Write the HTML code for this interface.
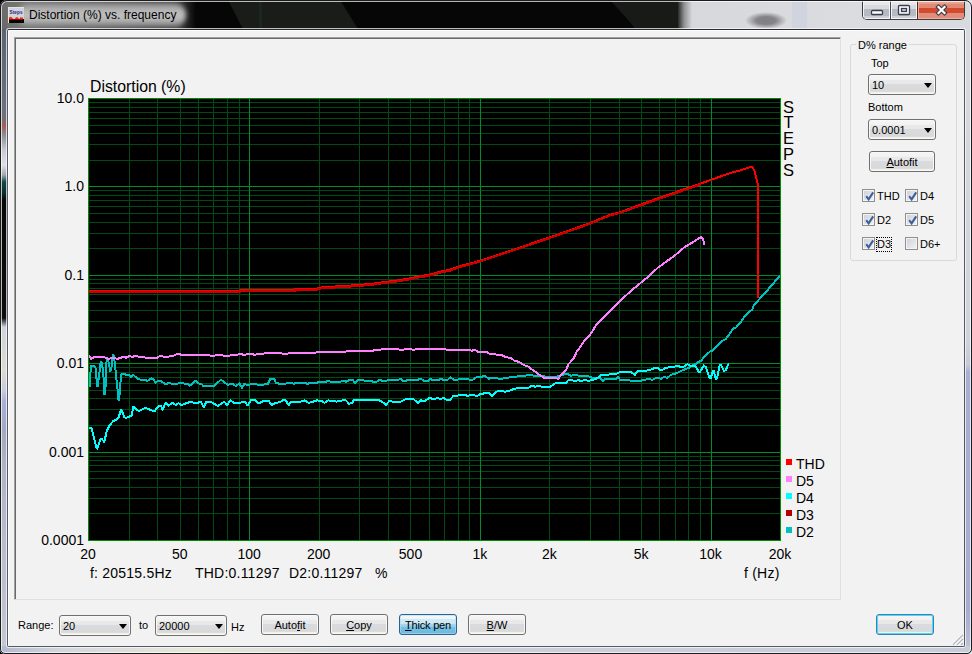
<!DOCTYPE html>
<html><head><meta charset="utf-8">
<style>
*{margin:0;padding:0;box-sizing:border-box}
html,body{width:972px;height:654px;overflow:hidden;background:linear-gradient(to right,#000 0,#000 486px,#e8e8ec 486px);font-family:"Liberation Sans",sans-serif}
.abs{position:absolute}
#frame{position:absolute;left:0;top:0;width:972px;height:654px;border-radius:7px 7px 5px 5px;overflow:hidden;background:#cdd0d8}
#fborder{position:absolute;left:0;top:0;width:972px;height:654px;border:1px solid #1c1c1c;border-radius:7px 7px 5px 5px;box-shadow:inset 0 0 0 1px rgba(255,255,255,.7)}
#lb{position:absolute;left:0;top:0;width:7px;height:654px;background:linear-gradient(to bottom,#6e6e6e 0,#6a6a6c 27px,#5c6470 30px,#687080 100px,#707078 118px,#a06058 126px,#909098 136px,#c8c8d0 150px,#e0e0e8 165px,#a0a8a8 175px,#104848 182px,#0c3030 192px,#080808 200px,#0c0c0c 318px,#d0d4dc 327px,#dcdcd0 370px,#c8cce0 390px,#a8b0d8 402px,#a4a8c0 430px,#b0b4c8 470px,#c4c8d2 654px)}
#title{position:absolute;left:0;top:0;width:972px;height:29px;
 background:linear-gradient(to right,#6e6e6e 0,#747474 20px,#3a3a3a 180px,#060606 196px,#060606 676px,#909092 684px,#d6d8dc 692px,#dadce0 860px,#d8dadf 972px)}
#tglow{position:absolute;left:18px;top:3px;width:168px;height:24px;border-radius:12px;background:linear-gradient(to bottom,#8c8c8c 0,#b0b0b0 25%,#c2c2c2 50%,#b0b0b0 75%,#7a7a7a 100%);filter:blur(2.5px)}
#ttext{position:absolute;left:29px;top:8px;font-size:12px;color:#000;white-space:nowrap}
#client{position:absolute;left:7px;top:29px;width:958px;height:618px;border:1px solid #555964;border-top-color:#2a2a2e;border-radius:2px;background:#f2f2f2;box-shadow:0 0 0 1px rgba(248,250,255,.75),inset 1px 1px 0 #fff}
#panel{position:absolute;left:14px;top:37px;width:827px;height:563px;border-top:1px solid #a0a0a0;border-left:1px solid #a0a0a0;border-right:1px solid #e6dce6;border-bottom:1px solid #e6dce6;box-shadow:inset 1px 1px 0 #696969}
.yl{position:absolute;left:0;width:84px;text-align:right;font-size:14px;line-height:18px;color:#000}
.xl{position:absolute;top:545px;width:60px;text-align:center;font-size:14px;line-height:18px;color:#000}
.lsq{position:absolute;left:786px;width:6px;height:6px}
.lt{position:absolute;left:796px;font-size:14px;line-height:18px;color:#000}
.t14{position:absolute;font-size:14px;line-height:18px;color:#000;white-space:nowrap}
.ui{position:absolute;font-size:11px;line-height:13px;color:#000;white-space:nowrap}
.btn{position:absolute;border:1px solid #707070;border-radius:3px;background:linear-gradient(to bottom,#f6f6f6 0,#f1f1f1 5px,#e9e9ea 5px,#e8e8e9 9px,#dadbdf 9px,#d8d9dd 16px,#dcdac6 16px,#e2e0d0 17px,#f0f0f0 17px);box-shadow:inset 0 0 0 1px #f8f8f8;text-align:center;font-size:11px;color:#000}
.btn span{position:absolute;left:0;right:0;top:3.8px;line-height:13px}
.btnp{position:absolute;border:1px solid #2c628b;border-radius:3px;background:linear-gradient(to bottom,#f4f8fa 0,#eef5f9 4px,#d2ebf5 4px,#cbe7f3 9px,#a8d7ee 9px,#90cdea 12px,#78c0e4 12px,#6cb8e0 19px);box-shadow:inset 0 0 0 1px rgba(180,220,240,.6);text-align:center;font-size:11px;color:#000}
.btnp span{position:absolute;left:0;right:0;top:3.8px;line-height:13px}
.btnd{position:absolute;border:1px solid #3c7fb1;border-radius:3px;background:linear-gradient(to bottom,#f6f6f6 0,#f1f1f1 5px,#e9e9ea 5px,#e8e8e9 9px,#dadbdf 9px,#d8d9dd 16px,#dcdac6 16px,#e2e0d0 17px,#f0f0f0 17px);box-shadow:inset 0 0 0 1px #48dbfb;text-align:center;font-size:11px;color:#000}
.btnd span{position:absolute;left:0;right:0;top:3.8px;line-height:13px}
.combo{position:absolute;border:1px solid #707070;border-radius:3px;background:linear-gradient(to bottom,#f6f6f6 0,#f1f1f1 5px,#e9e9ea 5px,#e8e8e9 9px,#dadbdf 9px,#d8d9dd 16px,#dcdac6 16px,#e2e0d0 17px,#f0f0f0 17px);box-shadow:inset 0 0 0 1px #f8f8f8;font-size:11px;color:#000}
.combo span{position:absolute;left:3px;top:4.3px;line-height:13px}
.arr{position:absolute;right:3.5px;top:8px;width:0;height:0;border-left:4.5px solid transparent;border-right:4.5px solid transparent;border-top:5px solid #000}
.cb{position:absolute;height:13px}
.box{position:absolute;left:0;top:0;width:13px;height:13px;border:1px solid #8e8f8f;background:linear-gradient(135deg,#cbcfd5,#f4f4f6);box-shadow:inset 0 0 0 1px #f4f4f4}
.cbl{position:absolute;left:15px;top:1px;font-size:11px;line-height:13px;white-space:nowrap}
.focus{outline:1px dotted #000}
#grp{position:absolute;left:850px;top:44px;width:107px;height:217px;border:1px solid #d6dadd;border-radius:3px}
</style></head><body>
<div id="frame">
<div id="title"></div>
<div class="abs" style="left:228px;top:0;width:130px;height:29px;background:#1a1c1a;clip-path:polygon(0 0,112px 0,130px 29px,15px 29px)"></div>
<div class="abs" style="left:259px;top:2px;width:3px;height:27px;background:#18281f"></div>
<div class="abs" style="left:610px;top:0;width:68px;height:29px;background:#181a18;clip-path:polygon(0 0,68px 0,68px 29px,25px 29px,20px 22px)"></div>
<div class="abs" style="left:745px;top:12px;width:42px;height:17px;background:radial-gradient(closest-side,rgba(128,128,128,1) 0%,rgba(132,132,134,1) 45%,rgba(170,170,174,.8) 75%,rgba(216,216,220,0) 100%)"></div>
<div class="abs" style="left:792px;top:1px;width:15px;height:28px;background:#d0d4de"></div>
<div id="lb"></div>
<div class="abs" style="left:965px;top:20px;width:7px;height:634px;background:linear-gradient(to bottom,#d8dadf 0,#d0d3da 320px,#c6c9d6 345px,#aaaed2 352px,#a8acd0 590px,#b4b8d4 615px,#c4c8d4 634px)"></div>
<div class="abs" style="left:0;top:646px;width:972px;height:8px;background:linear-gradient(to right,#b4b8cc 0,#c8ccd8 40px,#d4d6dc 60px,#e8e8d8 200px,#cdd0d8 400px,#c8ccd8 972px)"></div>
</div>
<div id="tglow"></div>
<div class="abs" style="left:862px;top:0;width:103px;height:20px;border:1px solid #3c3c3c;border-top:none;border-radius:0 0 5px 5px;overflow:hidden">
 <div class="abs" style="left:0;top:0;width:27px;height:19px;border:1px solid #f4f4f6;border-top:none;background:linear-gradient(to bottom,#ececef 0,#e6e6ea 5px,#d8dadf 5px,#d8dadf 9px,#b6bac3 9px,#b6bac3 16px,#cdd0d8 16px)"></div>
 <div class="abs" style="left:27px;top:0;width:1px;height:19px;background:#4a4a4a"></div>
 <div class="abs" style="left:28px;top:0;width:26px;height:19px;border:1px solid #f4f4f6;border-top:none;background:linear-gradient(to bottom,#ececef 0,#e6e6ea 5px,#d8dadf 5px,#d8dadf 9px,#b6bac3 9px,#b6bac3 16px,#cdd0d8 16px)"></div>
 <div class="abs" style="left:54px;top:0;width:1px;height:19px;background:#4a2a20"></div>
 <div class="abs" style="left:55px;top:0;width:47px;height:19px;border:1px solid #f0b0a0;border-top:none;background:linear-gradient(to bottom,#eaa898 0,#e8a090 4px,#e08a74 4px,#e08a74 8px,#d2492e 8px,#d24a30 13px,#e28c7a 13px)"></div>
</div>
<svg class="abs" style="left:862px;top:0" width="110" height="20">
 <rect x="9.5" y="10.5" width="11" height="4" rx="1" fill="#fff" stroke="#3a3e4c" stroke-width="1.3"/>
 <rect x="36.5" y="5.5" width="11" height="9" rx="1" fill="#fff" stroke="#3a3e4c" stroke-width="1.3"/>
 <rect x="39.5" y="8.5" width="5" height="3" fill="#d0d2d8" stroke="#3a3e4c" stroke-width="1.3"/>
 <path d="M76.5 7 L82.5 13 M82.5 7 L76.5 13" stroke="#3a3e4c" stroke-width="4.4" stroke-linecap="square"/>
 <path d="M76.5 7 L82.5 13 M82.5 7 L76.5 13" stroke="#fff" stroke-width="2.2" stroke-linecap="square"/>
</svg>
<svg class="abs" style="left:8px;top:7px" width="16" height="16">
<rect x="0" y="0" width="16" height="16" fill="#d2d2e0"/>
<rect x="0" y="0" width="16" height="1" fill="#e6e6d6"/>
<rect x="0" y="0" width="1" height="16" fill="#e6e6d6"/>
<rect x="1" y="12" width="15" height="4" fill="#060404"/>
<path d="M1 10.5 Q2.5 9 4 10.5 Q5.5 13 7 11.5 Q8.5 9 10 10.5 Q11 13 12 11 Q13 9 14 11 L15 10 L15 12.5 L1 12.5 Z" fill="#ff2a0a"/>
<text x="1.5" y="6.5" font-size="4.6" font-family="Liberation Sans" fill="#1e2a6e" font-weight="bold" textLength="13">Steps</text>
</svg>
<div id="ttext">Distortion (%) vs. frequency</div>
<div id="client"></div>
<div id="panel"></div>
<svg class="abs" style="left:0;top:0" width="972" height="654" shape-rendering="crispEdges">
<rect x="88" y="98" width="693" height="443" fill="#000"/>
<rect x="88" y="513" width="693" height="1" fill="#004a16"/>
<rect x="88" y="498" width="693" height="1" fill="#004a16"/>
<rect x="88" y="487" width="693" height="1" fill="#004a16"/>
<rect x="88" y="478" width="693" height="1" fill="#004a16"/>
<rect x="88" y="471" width="693" height="1" fill="#004a16"/>
<rect x="88" y="465" width="693" height="1" fill="#004a16"/>
<rect x="88" y="460" width="693" height="1" fill="#004a16"/>
<rect x="88" y="456" width="693" height="1" fill="#004a16"/>
<rect x="88" y="425" width="693" height="1" fill="#004a16"/>
<rect x="88" y="409" width="693" height="1" fill="#004a16"/>
<rect x="88" y="398" width="693" height="1" fill="#004a16"/>
<rect x="88" y="390" width="693" height="1" fill="#004a16"/>
<rect x="88" y="383" width="693" height="1" fill="#004a16"/>
<rect x="88" y="377" width="693" height="1" fill="#004a16"/>
<rect x="88" y="372" width="693" height="1" fill="#004a16"/>
<rect x="88" y="367" width="693" height="1" fill="#004a16"/>
<rect x="88" y="337" width="693" height="1" fill="#004a16"/>
<rect x="88" y="321" width="693" height="1" fill="#004a16"/>
<rect x="88" y="310" width="693" height="1" fill="#004a16"/>
<rect x="88" y="301" width="693" height="1" fill="#004a16"/>
<rect x="88" y="294" width="693" height="1" fill="#004a16"/>
<rect x="88" y="288" width="693" height="1" fill="#004a16"/>
<rect x="88" y="283" width="693" height="1" fill="#004a16"/>
<rect x="88" y="279" width="693" height="1" fill="#004a16"/>
<rect x="88" y="248" width="693" height="1" fill="#004a16"/>
<rect x="88" y="233" width="693" height="1" fill="#004a16"/>
<rect x="88" y="222" width="693" height="1" fill="#004a16"/>
<rect x="88" y="213" width="693" height="1" fill="#004a16"/>
<rect x="88" y="206" width="693" height="1" fill="#004a16"/>
<rect x="88" y="200" width="693" height="1" fill="#004a16"/>
<rect x="88" y="195" width="693" height="1" fill="#004a16"/>
<rect x="88" y="190" width="693" height="1" fill="#004a16"/>
<rect x="88" y="160" width="693" height="1" fill="#004a16"/>
<rect x="88" y="144" width="693" height="1" fill="#004a16"/>
<rect x="88" y="133" width="693" height="1" fill="#004a16"/>
<rect x="88" y="125" width="693" height="1" fill="#004a16"/>
<rect x="88" y="118" width="693" height="1" fill="#004a16"/>
<rect x="88" y="112" width="693" height="1" fill="#004a16"/>
<rect x="88" y="107" width="693" height="1" fill="#004a16"/>
<rect x="88" y="102" width="693" height="1" fill="#004a16"/>
<rect x="129" y="98" width="1" height="443" fill="#004a16"/>
<rect x="157" y="98" width="1" height="443" fill="#004a16"/>
<rect x="180" y="98" width="1" height="443" fill="#004a16"/>
<rect x="198" y="98" width="1" height="443" fill="#004a16"/>
<rect x="213" y="98" width="1" height="443" fill="#004a16"/>
<rect x="227" y="98" width="1" height="443" fill="#004a16"/>
<rect x="239" y="98" width="1" height="443" fill="#004a16"/>
<rect x="319" y="98" width="1" height="443" fill="#004a16"/>
<rect x="359" y="98" width="1" height="443" fill="#004a16"/>
<rect x="388" y="98" width="1" height="443" fill="#004a16"/>
<rect x="410" y="98" width="1" height="443" fill="#004a16"/>
<rect x="429" y="98" width="1" height="443" fill="#004a16"/>
<rect x="444" y="98" width="1" height="443" fill="#004a16"/>
<rect x="458" y="98" width="1" height="443" fill="#004a16"/>
<rect x="469" y="98" width="1" height="443" fill="#004a16"/>
<rect x="549" y="98" width="1" height="443" fill="#004a16"/>
<rect x="590" y="98" width="1" height="443" fill="#004a16"/>
<rect x="619" y="98" width="1" height="443" fill="#004a16"/>
<rect x="641" y="98" width="1" height="443" fill="#004a16"/>
<rect x="659" y="98" width="1" height="443" fill="#004a16"/>
<rect x="675" y="98" width="1" height="443" fill="#004a16"/>
<rect x="688" y="98" width="1" height="443" fill="#004a16"/>
<rect x="700" y="98" width="1" height="443" fill="#004a16"/>
<rect x="88" y="186" width="693" height="1" fill="#008c28"/>
<rect x="88" y="275" width="693" height="1" fill="#008c28"/>
<rect x="88" y="363" width="693" height="1" fill="#008c28"/>
<rect x="88" y="452" width="693" height="1" fill="#008c28"/>
<rect x="249" y="98" width="1" height="443" fill="#008c28"/>
<rect x="480" y="98" width="1" height="443" fill="#008c28"/>
<rect x="711" y="98" width="1" height="443" fill="#008c28"/>
<rect x="88.5" y="98.5" width="692" height="442" fill="none" stroke="#008c00" stroke-width="1"/>
</svg>
<svg class="abs" style="left:0;top:0" width="972" height="654">
<clipPath id="cp"><rect x="89" y="99" width="691" height="441"/></clipPath>
<g clip-path="url(#cp)">
<polyline points="89.7,385.8 90.1,376.6 91.0,366.0 94.3,366.0 95.6,368.3 96.6,379.4 97.0,385.8 98.0,385.8 98.8,377.5 100.7,361.9 102.0,362.4 103.9,381.2 104.3,394.0 105.3,394.0 105.7,381.2 106.6,360.0 108.0,359.6 110.3,371.1 111.7,366.5 113.0,355.0 114.0,355.5 115.0,365.6 116.3,377.5 117.7,390.4 118.6,400.5 120.0,391.3 120.9,374.8 122.2,373.7 124.5,374.3 129.1,375.2 131.0,377.5 133.2,374.8 138.3,379.4 145.6,380.0 147.4,381.0 151.7,378.3 153.6,379.2 155.4,382.9 157.9,380.8 161.0,381.0 165.3,384.1 169.6,382.9 172.1,384.1 177.0,384.1 179.5,382.9 188.1,384.1 189.4,386.0 195.6,380.8 199.3,383.8 201.7,384.1 203.0,385.7 214.0,385.7 220.9,379.8 227.7,384.8 232.6,383.8 235.7,386.0 239.4,383.5 241.9,387.8 244.3,384.1 247.4,384.8 253.6,384.1 259.3,384.8 263.6,384.8 264.9,383.8 268.0,383.8 270.4,378.6 274.1,378.6 276.0,382.9 279.7,383.8 285.2,383.8 287.1,382.9 292.0,382.9 293.9,384.1 295.7,382.9 305.6,382.9 307.5,384.1 309.3,382.9 316.7,382.9 318.6,381.7 326.0,381.7 327.8,380.8 331.5,382.0 340.2,382.0 342.0,380.8 346.4,381.7 350.0,379.6 352.5,379.8 355.0,382.9 358.7,379.8 362.4,379.8 364.3,380.8 371.0,380.8 373.5,382.0 376.2,382.0 379.9,379.8 382.3,380.8 386.7,380.8 388.5,379.8 398.4,379.8 400.2,378.6 402.7,380.8 405.8,380.8 407.7,379.8 418.1,379.8 420.0,378.6 424.3,380.8 428.0,380.8 430.5,378.6 431.7,379.8 439.1,379.8 441.0,378.6 442.8,379.8 447.8,379.8 450.2,377.3 454.0,379.8 457.7,379.8 458.9,378.6 467.5,378.6 469.4,379.8 472.5,379.8 476.2,377.3 478.0,376.7 482.3,376.7 484.2,375.5 488.5,378.6 494.6,378.0 500.7,378.9 511.9,377.0 524.2,375.8 530.4,374.6 534.0,376.0 556.3,377.0 558.8,375.8 567.4,373.6 571.0,376.0 574.2,374.8 580.0,376.0 587.3,376.0 592.3,377.8 599.7,377.8 602.8,380.9 605.9,378.7 612.0,378.5 615.7,379.1 618.2,377.0 620.0,379.7 628.0,380.3 638.0,381.5 642.3,380.3 647.8,379.1 652.8,379.7 656.5,377.8 661.4,378.7 663.9,377.0 667.6,377.8 670.7,374.8 676.2,373.3 682.4,370.4 688.6,368.0 692.5,365.5 695.7,363.9 698.9,361.7 701.6,360.6 703.7,356.9 706.4,354.8 710.7,351.0 712.8,350.5 716.0,346.7 721.4,341.4 725.6,339.3 728.9,335.0 733.0,328.5 736.0,327.5 740.0,323.0 745.0,316.0 750.0,311.0 752.0,310.0 754.0,305.0 757.0,302.0 759.0,299.5 765.0,293.0 772.0,285.0 779.5,276.0" fill="none" stroke="#00c0c0" stroke-width="2" stroke-linejoin="round" stroke-linecap="square" shape-rendering="crispEdges"/>
<polyline points="88.0,290.9 240.0,290.9 240.0,289.8 295.0,289.8 295.0,288.5 318.0,288.5 318.0,287.7 332.0,286.7 348.0,285.8 360.0,284.8 371.0,283.9 379.0,282.8 389.0,281.5 399.0,280.3 409.0,278.5 419.0,276.5 430.0,274.5 442.0,271.3 450.0,269.7 458.0,266.7 480.5,260.7 516.7,248.6 549.6,237.4 590.0,223.1 600.0,218.9 610.0,214.9 620.4,212.1 655.6,199.1 700.0,183.8 729.6,173.2 739.2,170.8 746.5,168.3 750.2,167.1 752.5,167.3 754.3,170.1 755.7,175.5 757.0,181.1 758.0,184.5 758.0,297.0" fill="none" stroke="#ff0000" stroke-width="2" stroke-linejoin="round" stroke-linecap="square" shape-rendering="crispEdges"/>
<polyline points="88.0,291.9 240.0,291.9 240.0,290.8 295.0,290.8 295.0,289.5 318.0,289.5 318.0,288.7 332.0,287.7 348.0,286.8 360.0,285.8 371.0,284.9 379.0,283.8 389.0,282.5 399.0,281.3 409.0,279.5 419.0,277.5 430.0,275.5 442.0,272.3 450.0,270.7 458.0,267.7 480.5,261.4 516.7,249.3 549.6,238.1 590.0,223.8 600.0,219.6 610.0,215.6 620.4,212.8 655.6,200.1 700.0,184.7" fill="none" stroke="#c80000" stroke-width="2" stroke-linejoin="round" stroke-linecap="square" shape-rendering="crispEdges"/>
<polyline points="89.2,427.7 91.4,428.0 94.0,438.2 96.7,448.4 97.2,448.7 100.5,439.3 101.5,438.7 104.2,441.9 106.9,430.7 109.6,425.3 113.3,421.0 117.0,419.4 118.7,417.3 120.8,409.8 121.9,410.9 124.5,417.3 126.1,417.8 128.8,416.8 132.0,415.2 133.1,406.6 134.7,407.1 136.9,410.3 139.5,410.9 144.4,408.2 147.0,408.4 150.2,409.8 154.5,411.4 158.8,405.8 161.0,405.5 162.5,409.7 165.6,402.9 168.6,405.7 172.3,402.9 176.0,405.0 178.5,403.3 181.6,405.0 185.9,403.3 190.9,401.7 195.8,403.5 200.7,401.7 203.8,407.2 206.3,401.7 210.6,401.7 218.0,406.0 224.2,401.7 227.3,405.0 230.4,400.4 234.0,402.9 245.2,402.3 247.7,405.4 251.4,399.8 255.0,399.8 258.8,403.5 263.7,400.8 268.6,400.8 271.7,405.0 275.4,402.9 279.9,402.2 284.3,399.5 286.1,401.0 288.6,405.3 290.4,402.0 294.8,402.2 300.9,401.6 304.6,400.4 308.3,402.8 312.0,402.0 317.0,400.4 321.9,401.0 324.4,402.8 328.0,400.4 336.7,401.6 345.4,399.8 349.0,403.7 352.2,402.8 354.0,399.8 378.7,399.8 382.4,402.2 386.1,404.7 389.2,401.2 394.0,401.7 400.7,401.7 406.0,399.1 413.4,399.1 418.1,403.1 420.8,400.4 424.8,401.1 429.5,398.0 434.1,399.1 437.5,398.0 440.2,399.1 443.5,398.0 446.8,400.1 450.2,399.7 452.9,396.4 459.5,395.3 462.9,394.8 467.6,395.7 472.9,394.8 476.9,396.1 480.9,393.7 489.0,393.1 492.3,396.4 495.7,391.7 501.0,390.8 505.0,391.7 509.0,390.8 515.0,388.6 520.5,388.1 529.1,387.5 531.0,385.7 535.3,386.7 539.0,385.7 541.5,386.7 550.1,386.7 555.7,383.0 558.8,383.2 566.2,382.6 568.6,379.8 575.0,380.9 578.7,380.3 581.2,380.9 584.9,380.0 588.6,380.9 591.0,380.3 596.0,379.1 600.9,375.4 604.6,374.8 615.7,374.1 620.0,372.0 624.4,372.3 631.8,372.5 634.9,374.8 636.7,372.3 638.0,371.0 649.0,370.4 654.0,368.3 657.7,368.0 660.2,369.8 662.7,369.8 665.1,368.0 673.8,366.7 677.5,365.9 680.0,366.7 683.6,366.7 687.3,364.3 689.8,365.5 695.7,366.5 698.9,371.9 700.0,371.9 703.7,365.5 705.9,367.0 709.6,378.3 710.7,378.3 712.8,371.3 713.9,371.3 716.0,379.4 717.1,378.3 719.8,364.9 720.8,364.9 724.0,370.8 725.6,370.3 728.3,364.4" fill="none" stroke="#00ffff" stroke-width="2" stroke-linejoin="round" stroke-linecap="square" shape-rendering="crispEdges"/>
<polyline points="89.5,356.7 91.0,358.8 95.4,356.7 104.0,357.0 108.4,358.8 112.7,357.9 117.6,358.8 123.8,356.7 126.0,357.9 129.4,355.8 132.4,357.0 135.5,355.8 139.9,357.0 148.5,357.9 157.0,357.7 160.0,355.8 164.5,357.0 173.2,356.0 177.5,353.8 184.3,355.4 196.6,355.0 208.0,354.8 211.5,356.0 220.0,354.9 225.0,356.0 236.7,354.9 241.0,353.7 243.2,354.9 251.9,353.7 254.0,354.9 260.5,353.7 280.0,352.7 282.8,353.7 305.9,352.9 331.4,351.9 372.5,350.8 376.0,349.8 393.4,348.8 401.3,349.8 410.7,348.8 412.8,349.8 419.3,348.8 456.7,349.8 469.9,349.6 471.7,350.9 474.8,349.6 477.9,351.7 487.2,352.0 489.0,353.6 497.0,354.6 502.6,355.4 505.7,357.3 511.2,357.9 514.3,360.7 519.3,362.0 524.2,365.3 527.9,366.5 534.0,370.9 537.8,373.6 544.0,377.7 555.0,378.0 558.1,378.9 560.0,376.4 566.2,369.6 568.6,364.0 573.6,358.5 577.3,350.5 579.1,348.6 584.7,340.0 590.2,334.5 596.6,324.4 603.0,318.0 612.2,309.2 621.3,299.7 632.4,289.6 647.0,277.7 658.0,267.6 674.5,255.7 683.7,247.8 694.7,241.0 701.1,237.0 703.0,239.2 704.2,243.8" fill="none" stroke="#ff80ff" stroke-width="2" stroke-linejoin="round" stroke-linecap="square" shape-rendering="crispEdges"/>
</g>
</svg>
<div class="yl" style="top:89.0px">10.0</div>
<div class="yl" style="top:177.4px">1.0</div>
<div class="yl" style="top:265.8px">0.1</div>
<div class="yl" style="top:354.2px">0.01</div>
<div class="yl" style="top:442.6px">0.001</div>
<div class="yl" style="top:531.0px">0.0001</div>
<div class="xl" style="left:58.0px">20</div>
<div class="xl" style="left:149.8px">50</div>
<div class="xl" style="left:219.2px">100</div>
<div class="xl" style="left:288.7px">200</div>
<div class="xl" style="left:380.5px">500</div>
<div class="xl" style="left:449.9px">1k</div>
<div class="xl" style="left:519.3px">2k</div>
<div class="xl" style="left:611.1px">5k</div>
<div class="xl" style="left:680.6px">10k</div>
<div class="xl" style="left:750.0px">20k</div>
<div class="t14" style="left:90px;top:77.5px;font-size:15.8px">Distortion (%)</div>
<div class="t14" style="left:782px;top:99.5px;width:13px;text-align:center;line-height:15.9px;font-size:16.5px">S<br>T<br>E<br>P<br>S</div>
<div class="lsq" style="top:459px;background:#ff0000"></div><div class="lt" style="top:454.7px">THD</div>
<div class="lsq" style="top:476px;background:#ff80ff"></div><div class="lt" style="top:471.7px">D5</div>
<div class="lsq" style="top:493px;background:#00ffff"></div><div class="lt" style="top:488.7px">D4</div>
<div class="lsq" style="top:510px;background:#b40000"></div><div class="lt" style="top:505.7px">D3</div>
<div class="lsq" style="top:527px;background:#00c0c0"></div><div class="lt" style="top:522.7px">D2</div>
<div class="t14" style="left:90px;top:563.7px;letter-spacing:0.22px">f: 20515.5Hz</div>
<div class="t14" style="left:195px;top:563.7px;letter-spacing:0.22px">THD:0.11297</div>
<div class="t14" style="left:289px;top:563.7px;letter-spacing:0.22px">D2:0.11297</div>
<div class="t14" style="left:375px;top:563.7px">%</div>
<div class="t14" style="left:744px;top:563.7px;letter-spacing:0.22px">f (Hz)</div>
<div id="grp"></div>
<div class="ui" style="left:856px;top:39px;background:#f0f0f0;padding:0 2px">D% range</div>
<div class="ui" style="left:871px;top:57px">Top</div>
<div class="combo" style="left:868px;top:74px;width:68px;height:21px"><span>10</span><div class="arr"></div></div>
<div class="ui" style="left:868px;top:101px">Bottom</div>
<div class="combo" style="left:868px;top:119px;width:68px;height:21px"><span>0.0001</span><div class="arr"></div></div>
<div class="btn" style="left:869px;top:151px;width:66px;height:21px"><span><u>A</u>utofit</span></div>
<div class="cb" style="left:862px;top:189px"><div class="box"><svg width="13" height="13" style="position:absolute;left:0;top:0"><path d="M3.2 6.2 L5.6 9.4 L10.2 2.4" fill="none" stroke="#40609c" stroke-width="2.1"/></svg></div><span class="cbl">THD</span></div>
<div class="cb" style="left:905px;top:189px"><div class="box"><svg width="13" height="13" style="position:absolute;left:0;top:0"><path d="M3.2 6.2 L5.6 9.4 L10.2 2.4" fill="none" stroke="#40609c" stroke-width="2.1"/></svg></div><span class="cbl">D4</span></div>
<div class="cb" style="left:862px;top:213px"><div class="box"><svg width="13" height="13" style="position:absolute;left:0;top:0"><path d="M3.2 6.2 L5.6 9.4 L10.2 2.4" fill="none" stroke="#40609c" stroke-width="2.1"/></svg></div><span class="cbl">D2</span></div>
<div class="cb" style="left:905px;top:213px"><div class="box"><svg width="13" height="13" style="position:absolute;left:0;top:0"><path d="M3.2 6.2 L5.6 9.4 L10.2 2.4" fill="none" stroke="#40609c" stroke-width="2.1"/></svg></div><span class="cbl">D5</span></div>
<div class="cb" style="left:862px;top:237px"><div class="box"><svg width="13" height="13" style="position:absolute;left:0;top:0"><path d="M3.2 6.2 L5.6 9.4 L10.2 2.4" fill="none" stroke="#40609c" stroke-width="2.1"/></svg></div><span class="cbl focus">D3</span></div>
<div class="cb" style="left:905px;top:237px"><div class="box"></div><span class="cbl">D6+</span></div>
<div class="ui" style="left:18px;top:619px">Range:</div>
<div class="combo" style="left:59px;top:615px;width:72px;height:21px"><span>20</span><div class="arr"></div></div>
<div class="ui" style="left:139px;top:619px">to</div>
<div class="combo" style="left:155px;top:615px;width:72px;height:21px"><span>20000</span><div class="arr"></div></div>
<div class="ui" style="left:231px;top:620.5px">Hz</div>
<div class="btn" style="left:261px;top:614px;width:58px;height:21px"><span>Auto<u>f</u>it</span></div>
<div class="btn" style="left:330px;top:614px;width:58px;height:21px"><span><u>C</u>opy</span></div>
<div class="btnp" style="left:399px;top:614px;width:58px;height:21px"><span><span style="position:static;letter-spacing:-0.2px"><u>T</u>hick pen</span></span></div>
<div class="btn" style="left:468px;top:614px;width:58px;height:21px"><span><u>B</u>/W</span></div>
<div class="btnd" style="left:876px;top:614px;width:58px;height:21px"><span>OK</span></div>
<svg class="abs" style="left:950px;top:632px" width="14" height="14">
<path d="M13 3 L3 13 M13 7 L7 13 M13 11 L11 13" stroke="#b0b4bc" stroke-width="1.2"/>
<path d="M13.8 3.8 L3.8 13.8 M13.8 7.8 L7.8 13.8" stroke="#fff" stroke-width="1"/>
</svg>
<div id="fborder"></div>
</body></html>
